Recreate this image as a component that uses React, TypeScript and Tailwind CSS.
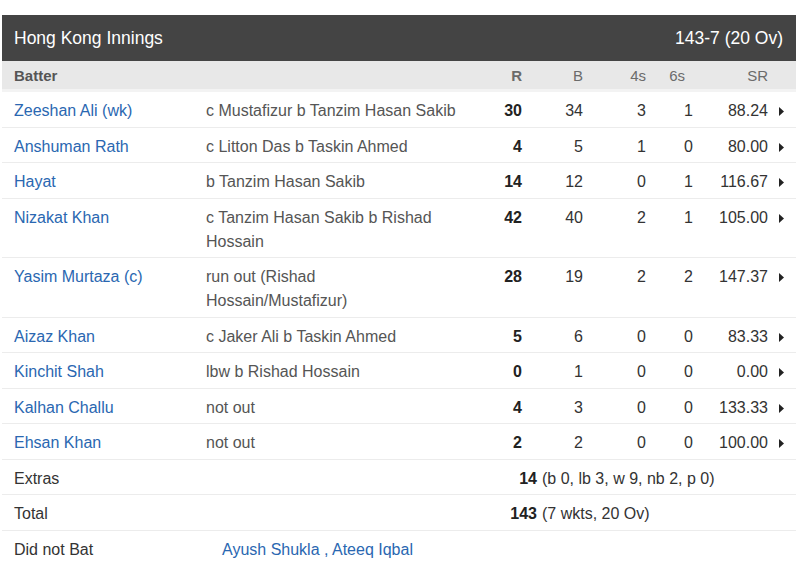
const batters = [
  { name: 'Zeeshan Ali (wk)', out: 'c Mustafizur b Tanzim Hasan Sakib', r: 30, b: 34, f: 3, s: 1, sr: '88.24' },
  { name: 'Anshuman Rath', out: 'c Litton Das b Taskin Ahmed', r: 4, b: 5, f: 1, s: 0, sr: '80.00' },
  { name: 'Hayat', out: 'b Tanzim Hasan Sakib', r: 14, b: 12, f: 0, s: 1, sr: '116.67' },
  { name: 'Nizakat Khan', out: 'c Tanzim Hasan Sakib b Rishad Hossain', r: 42, b: 40, f: 2, s: 1, sr: '105.00' },
  { name: 'Yasim Murtaza (c)', out: 'run out (Rishad Hossain/Mustafizur)', r: 28, b: 19, f: 2, s: 2, sr: '147.37' },
  { name: 'Aizaz Khan', out: 'c Jaker Ali b Taskin Ahmed', r: 5, b: 6, f: 0, s: 0, sr: '83.33' },
  { name: 'Kinchit Shah', out: 'lbw b Rishad Hossain', r: 0, b: 1, f: 0, s: 0, sr: '0.00' },
  { name: 'Kalhan Challu', out: 'not out', r: 4, b: 3, f: 0, s: 0, sr: '133.33' },
  { name: 'Ehsan Khan', out: 'not out', r: 2, b: 2, f: 0, s: 0, sr: '100.00' },
];

const cols = 'grid grid-cols-[204px_270px_46px_61px_63px_47px_75px_28px]';
const row = 'border-b border-[#ececec] pt-[7px] pb-[3.5px] text-[16px] leading-[24px] text-[#333]';

const Caret = () => (
  <svg width="5" height="9" viewBox="0 0 5 9" className="mt-[8px]">
    <path d="M0 0 L5 4.5 L0 9 Z" fill="#222" />
  </svg>
);

export default function App() {
  return (
    <div className="min-h-screen bg-white pt-[15px] pl-[2px] font-['Liberation_Sans',Arial,sans-serif]">
      <div className="w-[794px]">
        <div className="flex h-[46px] items-center justify-between bg-[#444444] pl-[12px] pr-[13px] text-[17.5px] text-white">
          <span>Hong Kong Innings</span>
          <span>143-7 (20 Ov)</span>
        </div>

        <div className={`${cols} h-[31px] items-center border-b-[3px] border-[#f3f3f3] bg-[#e8e8e8] pt-[2px] text-[15px] text-[#6b6b6b]`}>
          <div className="pl-[12px] font-bold text-[#555]">Batter</div>
          <div />
          <div className="text-right font-bold">R</div>
          <div className="text-right">B</div>
          <div className="text-right">4s</div>
          <div className="pr-[8px] text-right">6s</div>
          <div className="text-right">SR</div>
          <div />
        </div>

        {batters.map((p) => (
          <div key={p.name} className={`${cols} ${row}`}>
            <div className="pl-[12px] text-[#2a67b1]">{p.name}</div>
            <div className="pr-[18px] text-[#555]">{p.out}</div>
            <div className="text-right font-bold text-[#222]">{p.r}</div>
            <div className="text-right">{p.b}</div>
            <div className="text-right">{p.f}</div>
            <div className="text-right">{p.s}</div>
            <div className="text-right">{p.sr}</div>
            <div className="pl-[11px]"><Caret /></div>
          </div>
        ))}

        <div className={`flex ${row}`}>
          <div className="w-[204px] pl-[12px]">Extras</div>
          <div className="w-[331px] text-right font-bold text-[#222]">14</div>
          <div className="pl-[5px]">(b 0, lb 3, w 9, nb 2, p 0)</div>
        </div>
        <div className={`flex ${row}`}>
          <div className="w-[204px] pl-[12px]">Total</div>
          <div className="w-[331px] text-right font-bold text-[#222]">143</div>
          <div className="pl-[5px]">(7 wkts, 20 Ov)</div>
        </div>
        <div className="flex pt-[7px] pb-[3.5px] text-[16px] leading-[24px] text-[#333]">
          <div className="w-[220px] pl-[12px]">Did not Bat</div>
          <div className="text-[#2a67b1]">Ayush Shukla , Ateeq Iqbal</div>
        </div>
      </div>
    </div>
  );
}
